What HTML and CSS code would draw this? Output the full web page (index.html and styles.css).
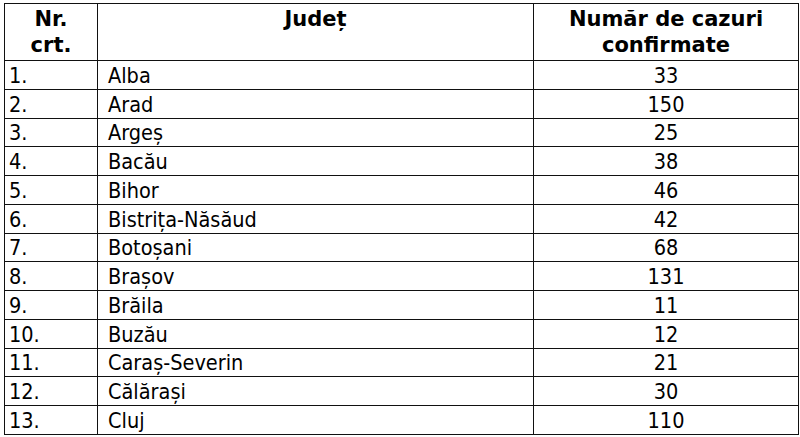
FILE: index.html
```html
<!DOCTYPE html>
<html lang="ro">
<head>
<meta charset="utf-8">
<link rel="stylesheet" href="styles.css">
</head>
<body>
<table class="cases">
  <thead>
    <tr>
      <th class="c-nr">Nr.<br>crt.</th>
      <th class="c-jud">Județ</th>
      <th class="c-num">Număr de cazuri<br>confirmate</th>
    </tr>
  </thead>
  <tbody>
    <tr><td class="c-nr">1.</td><td class="c-jud">Alba</td><td class="c-num">33</td></tr>
    <tr><td class="c-nr">2.</td><td class="c-jud">Arad</td><td class="c-num">150</td></tr>
    <tr><td class="c-nr">3.</td><td class="c-jud">Argeș</td><td class="c-num">25</td></tr>
    <tr><td class="c-nr">4.</td><td class="c-jud">Bacău</td><td class="c-num">38</td></tr>
    <tr><td class="c-nr">5.</td><td class="c-jud">Bihor</td><td class="c-num">46</td></tr>
    <tr><td class="c-nr">6.</td><td class="c-jud">Bistrița-Năsăud</td><td class="c-num">42</td></tr>
    <tr><td class="c-nr">7.</td><td class="c-jud">Botoșani</td><td class="c-num">68</td></tr>
    <tr><td class="c-nr">8.</td><td class="c-jud">Brașov</td><td class="c-num">131</td></tr>
    <tr><td class="c-nr">9.</td><td class="c-jud">Brăila</td><td class="c-num">11</td></tr>
    <tr><td class="c-nr">10.</td><td class="c-jud">Buzău</td><td class="c-num">12</td></tr>
    <tr><td class="c-nr">11.</td><td class="c-jud">Caraș-Severin</td><td class="c-num">21</td></tr>
    <tr><td class="c-nr">12.</td><td class="c-jud">Călărași</td><td class="c-num">30</td></tr>
    <tr><td class="c-nr">13.</td><td class="c-jud">Cluj</td><td class="c-num">110</td></tr>
  </tbody>
</table>
</body>
</html>
```
FILE: styles.css
```css
html, body {
  margin: 0;
  padding: 0;
  background: #fff;
}
body {
  padding: 3px 0 0 4px;
  font-family: "DejaVu Sans", "Liberation Sans", sans-serif;
  color: #000;
}
.cases {
  border-collapse: collapse;
  table-layout: fixed;
  width: 794px;
  font-size: 21px;
}
.cases th, .cases td {
  border: 1px solid #111;
  padding: 0;
  overflow: hidden;
  white-space: nowrap;
}
.cases th {
  height: 57px;
  font-weight: bold;
  line-height: 26px;
  text-align: center;
  vertical-align: top;
  padding-top: 2px;
  box-sizing: border-box;
}
.cases td {
  height: 28.77px;
  line-height: 24px;
  vertical-align: bottom;
  padding-bottom: 1px;
  box-sizing: border-box;
  font-size: 21.5px;
  font-stretch: condensed;
}
.cases .c-nr { width: 93px; }
.cases .c-jud { width: 436px; }
.cases .c-num { width: 265px; }
.cases td.c-nr { padding-left: 4px; text-align: left; }
.cases td.c-jud { padding-left: 10px; text-align: left; }
.cases td.c-num { text-align: center; }
```
